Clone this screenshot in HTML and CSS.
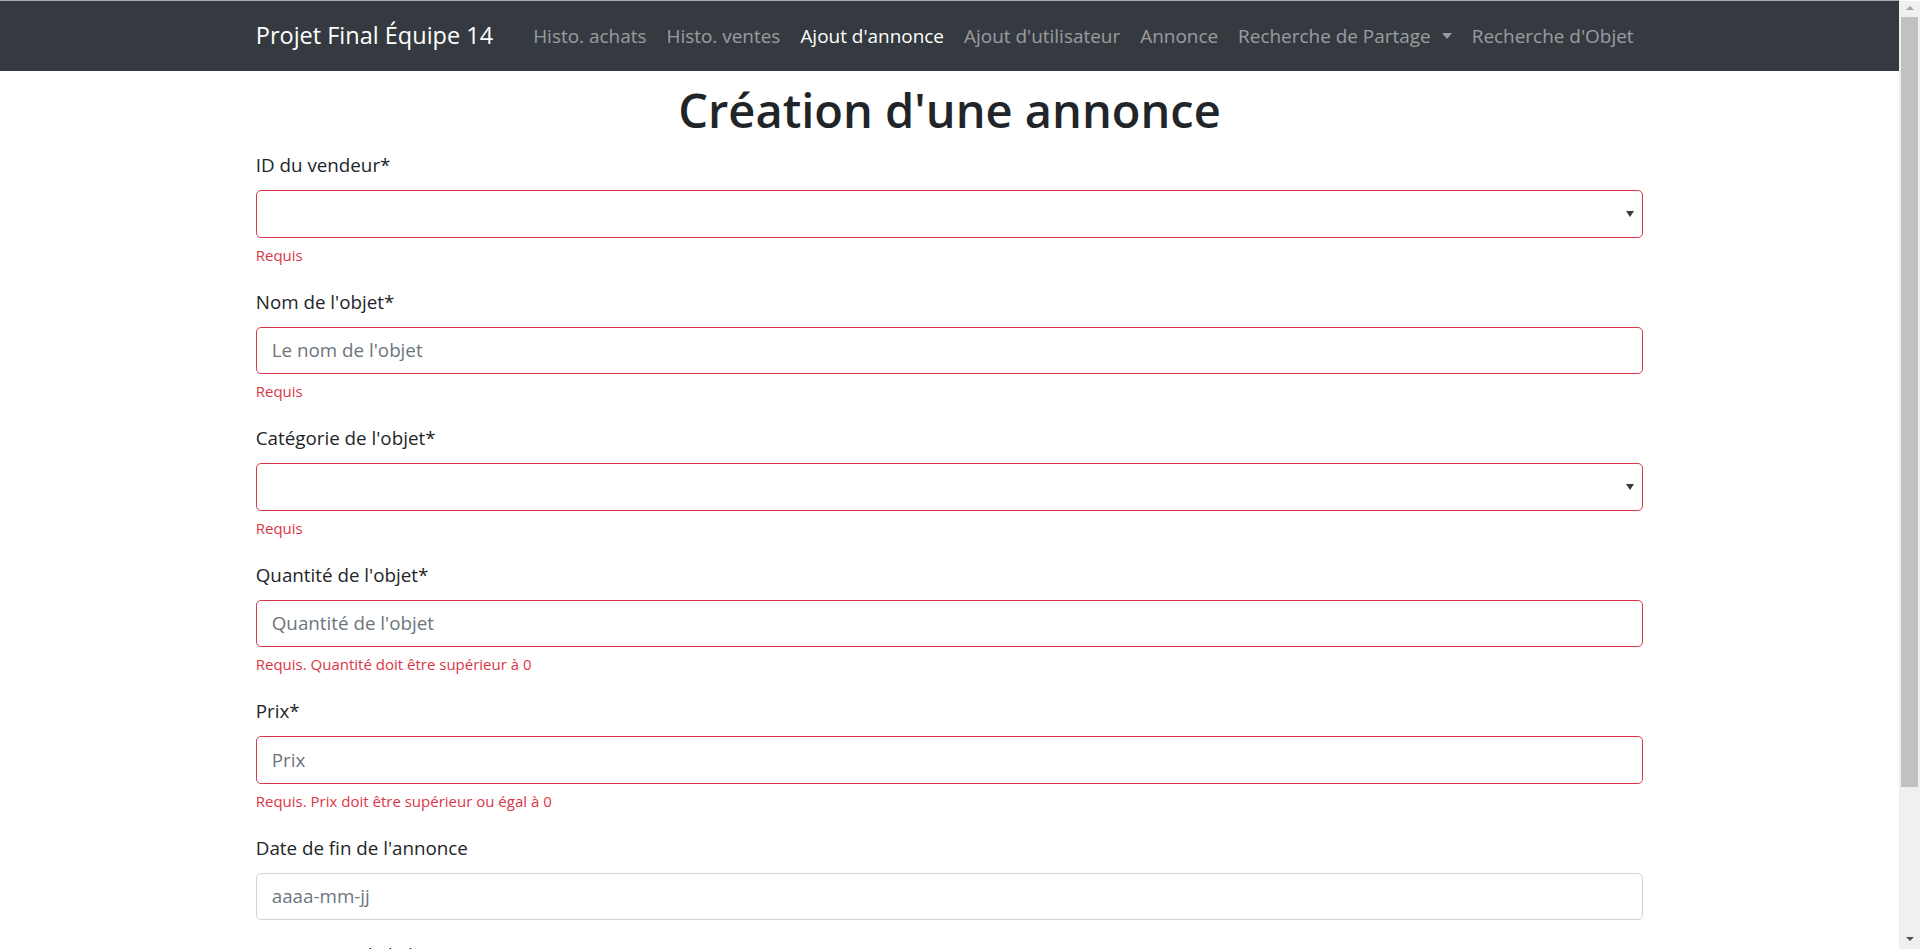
FILE: index.html
```html
<!DOCTYPE html>
<html lang="fr">
<head>
<meta charset="utf-8">
<title>Projet Final Équipe 14</title>
<link rel="stylesheet" href="styles.css">
</head>
<body>
<nav class="navbar">
  <div class="nav-container">
    <a class="brand" href="#">Projet Final Équipe 14</a>
    <ul class="nav">
      <li><a class="nav-link" href="#">Histo. achats</a></li>
      <li><a class="nav-link" href="#">Histo. ventes</a></li>
      <li><a class="nav-link active" href="#">Ajout d'annonce</a></li>
      <li><a class="nav-link" href="#">Ajout d'utilisateur</a></li>
      <li><a class="nav-link" href="#">Annonce</a></li>
      <li><a class="nav-link dropdown-toggle" href="#">Recherche de Partage</a></li>
      <li><a class="nav-link" href="#">Recherche d'Objet</a></li>
    </ul>
  </div>
</nav>
<main class="container">
  <h1 class="title">Création d'une annonce</h1>
  <form class="form">
    <div class="form-group">
      <label class="form-label">ID du vendeur*</label>
      <div class="select-wrap"><select class="form-control is-invalid"><option></option></select></div>
      <div class="invalid-feedback">Requis</div>
    </div>
    <div class="form-group">
      <label class="form-label">Nom de l'objet*</label>
      <input class="form-control is-invalid" type="text" placeholder="Le nom de l'objet">
      <div class="invalid-feedback">Requis</div>
    </div>
    <div class="form-group">
      <label class="form-label">Catégorie de l'objet*</label>
      <div class="select-wrap"><select class="form-control is-invalid"><option></option></select></div>
      <div class="invalid-feedback">Requis</div>
    </div>
    <div class="form-group">
      <label class="form-label">Quantité de l'objet*</label>
      <input class="form-control is-invalid" type="text" placeholder="Quantité de l'objet">
      <div class="invalid-feedback">Requis. Quantité doit être supérieur à 0</div>
    </div>
    <div class="form-group">
      <label class="form-label">Prix*</label>
      <input class="form-control is-invalid" type="text" placeholder="Prix">
      <div class="invalid-feedback">Requis. Prix doit être supérieur ou égal à 0</div>
    </div>
    <div class="form-group">
      <label class="form-label">Date de fin de l'annonce</label>
      <input class="form-control" type="text" placeholder="aaaa-mm-jj">
    </div>
    <div class="form-group">
      <label class="form-label">Description de l'objet</label>
      <textarea class="form-control textarea" placeholder="Description de l'objet"></textarea>
    </div>
    <button class="btn" type="button">Créer l'annonce</button>
  </form>
</main>
<div class="scrollbar" aria-hidden="true">
  <span class="sb-up"></span>
  <span class="sb-thumb"></span>
  <span class="sb-down"></span>
</div>
</body>
</html>
```
FILE: styles.css
```css
body {
  margin: 0 21px 0 0;
  border-top: 1px solid #a9a9a9;
  font-family: "Open Sans", "Noto Sans", "Liberation Sans", sans-serif;
  font-size: 18.8px;
  line-height: 30px;
  color: #212529;
  background: #fff;
}
.navbar {
  background: #343a40;
  height: 70px;
  padding: 0 20px;
  box-sizing: border-box;
  display: flex;
  align-items: center;
}
.nav-container {
  width: 100%;
  max-width: 1425px;
  margin: 0 auto;
  padding: 0 18.75px;
  box-sizing: border-box;
  display: flex;
  align-items: center;
}
.brand {
  font-size: 23.5px;
  line-height: 37.5px;
  color: #fff;
  text-decoration: none;
  margin-right: 30px;
  white-space: nowrap;
}
.nav {
  display: flex;
  list-style: none;
  margin: 0;
  padding: 0;
}
.nav-link {
  display: block;
  padding: 10px;
  font-size: 18.95px;
  color: rgba(255, 255, 255, 0.5);
  text-decoration: none;
  white-space: nowrap;
}
.nav-link.active {
  color: #fff;
}
.dropdown-toggle::after {
  content: "";
  display: inline-block;
  margin-left: 11px;
  vertical-align: 4px;
  border-top: 6px solid;
  border-right: 5px solid transparent;
  border-left: 5px solid transparent;
}
.container {
  max-width: 1425px;
  margin: 0 auto;
  padding: 0 18.75px;
  box-sizing: border-box;
}
.title {
  margin: 9px 0 10px;
  font-size: 47px;
  font-weight: 600;
  line-height: 60px;
  text-align: center;
}
.form-group {
  margin-bottom: 20px;
}
.form-label {
  display: inline-block;
  margin-bottom: 10px;
}
.form-control {
  display: block;
  width: 100%;
  height: 47.5px;
  padding: 7.5px 15px;
  box-sizing: border-box;
  font-family: inherit;
  font-size: 18.8px;
  line-height: 30px;
  color: #495057;
  background: #fff;
  border: 1px solid #ced4da;
  border-radius: 5px;
  outline: none;
}
.form-control::placeholder {
  color: #6c757d;
  opacity: 1;
}
.form-control.is-invalid {
  border-color: #dc3545;
}
.select-wrap {
  position: relative;
}
.select-wrap select {
  -webkit-appearance: none;
  appearance: none;
}
.select-wrap::after {
  content: "";
  position: absolute;
  right: 9px;
  top: 50%;
  margin-top: -3px;
  border-top: 6px solid #3c3c3c;
  border-left: 4px solid transparent;
  border-right: 4px solid transparent;
  pointer-events: none;
}
.textarea {
  height: 120px;
  resize: vertical;
}
.invalid-feedback {
  margin-top: 5px;
  font-size: 15px;
  line-height: 24px;
  color: #dc3545;
}
.btn {
  font-family: inherit;
  font-size: 18.8px;
  line-height: 30px;
  padding: 7.5px 15px;
  color: #fff;
  background: #007bff;
  border: 1px solid #007bff;
  border-radius: 5px;
  margin-bottom: 40px;
}
.scrollbar {
  position: fixed;
  top: 1px;
  right: 0;
  bottom: 0;
  width: 21px;
  background: #f0f0f0;
  display: flex;
  flex-direction: column;
  align-items: center;
}
.sb-up {
  margin-top: 5px;
  border-bottom: 4px solid #a3a3a3;
  border-left: 4.5px solid transparent;
  border-right: 4.5px solid transparent;
}
.sb-thumb {
  margin-top: 7px;
  width: 17px;
  height: 770px;
  background: #c1c1c1;
}
.sb-down {
  margin-top: auto;
  margin-bottom: 8px;
  border-top: 4px solid #505050;
  border-left: 4.5px solid transparent;
  border-right: 4.5px solid transparent;
}
```
